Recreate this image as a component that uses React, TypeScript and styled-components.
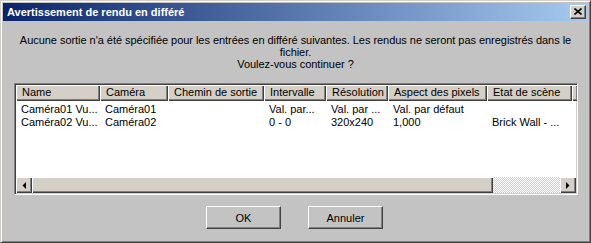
import React from "react";
import styled, { createGlobalStyle } from "styled-components";

const Global = createGlobalStyle`
  html, body { margin: 0; padding: 0; background: #c3c3c3; }
  * { box-sizing: border-box; }
`;

const FACE = "#c3c3c3";
const BEIGE = "#d4d0c8";

const Window = styled.div`
  width: 591px;
  height: 243px;
  background: ${FACE};
  border-top: 1px solid ${BEIGE};
  border-left: 1px solid ${BEIGE};
  border-right: 1px solid #404040;
  border-bottom: 1px solid #404040;
  box-shadow: inset 1px 1px #fff, inset -1px -1px #808080;
  padding: 2px;
  display: flex;
  flex-direction: column;
  font-family: "Liberation Sans", Arial, sans-serif;
  font-size: 11px;
  color: #000;
`;

const TitleBar = styled.div`
  height: 18px;
  display: flex;
  align-items: center;
  justify-content: space-between;
  padding: 0 2px 0 2px;
  background: linear-gradient(to right, #0a246a, #a6caf0);
`;

const Title = styled.span`
  color: #fff;
  font-weight: bold;
  font-size: 11px;
  padding-left: 2px;
  white-space: nowrap;
`;

const CloseButton = styled.div`
  width: 16px;
  height: 14px;
  background: ${BEIGE};
  border-top: 1px solid #fff;
  border-left: 1px solid #fff;
  border-right: 1px solid #404040;
  border-bottom: 1px solid #404040;
  box-shadow: inset -1px -1px #808080;
  display: flex;
  align-items: center;
  justify-content: center;
  padding-right: 1px;
  padding-bottom: 1px;
`;

const Message = styled.div`
  margin-top: 13px;
  text-align: center;
  line-height: 12px;
  white-space: nowrap;
  letter-spacing: -0.04px;
`;

const ListView = styled.div`
  margin: 13px 0 0 11px;
  width: 564px;
  height: 112px;
  background: #fff;
  border-top: 1px solid #808080;
  border-left: 1px solid #808080;
  border-right: 1px solid #fff;
  border-bottom: 1px solid #fff;
  box-shadow: inset 1px 1px #404040, inset -1px -1px ${BEIGE};
  padding: 1px;
  display: flex;
  flex-direction: column;
  overflow: hidden;
`;

const HeaderRow = styled.div`
  display: flex;
  height: 16px;
  flex: none;
`;

const HeaderCell = styled.div<{ $w: number }>`
  width: ${(p) => p.$w}px;
  flex: none;
  height: 16px;
  line-height: 15px;
  padding-left: 6px;
  background: ${BEIGE};
  box-shadow: inset 1px 1px #fff, inset -1px -1px #404040, inset -2px -2px #808080;
  white-space: nowrap;
  overflow: hidden;
`;

const Body = styled.div`
  flex: 1;
  padding-top: 2px;
`;

const Row = styled.div`
  display: flex;
  height: 13px;
  line-height: 13px;
`;

const Cell = styled.div<{ $w: number }>`
  width: ${(p) => p.$w}px;
  flex: none;
  padding-left: 5px;
  white-space: nowrap;
  overflow: hidden;
`;

const ScrollBar = styled.div`
  display: flex;
  height: 16px;
  flex: none;
  background: repeating-conic-gradient(#fff 0 25%, ${BEIGE} 0 50%) 0 0 / 2px 2px;
`;

const ScrollButton = styled.div`
  width: 16px;
  height: 16px;
  flex: none;
  background: ${BEIGE};
  box-shadow: inset 1px 1px #fff, inset -1px -1px #404040, inset -2px -2px #808080;
  display: flex;
  align-items: center;
  justify-content: center;
`;

const Thumb = styled.div<{ $w: number }>`
  width: ${(p) => p.$w}px;
  flex: none;
  height: 16px;
  background: ${BEIGE};
  box-shadow: inset 1px 1px #fff, inset -1px -1px #404040, inset -2px -2px #808080;
`;

const Spacer = styled.div`
  flex: 1;
`;

const ButtonRow = styled.div`
  margin-top: 11px;
  display: flex;
  justify-content: center;
  gap: 27px;
  padding-right: 2px;
`;

const Button = styled.div`
  width: 75px;
  height: 23px;
  background: ${FACE};
  border-top: 1px solid #fff;
  border-left: 1px solid #fff;
  border-right: 1px solid #404040;
  border-bottom: 1px solid #404040;
  box-shadow: inset -1px -1px #808080;
  display: flex;
  align-items: center;
  justify-content: center;
  font-size: 11px;
`;

const columns = [
  { title: "Name", w: 84 },
  { title: "Caméra", w: 68 },
  { title: "Chemin de sortie", w: 96 },
  { title: "Intervalle", w: 62 },
  { title: "Résolution", w: 62 },
  { title: "Aspect des pixels", w: 99 },
  { title: "Etat de scène", w: 85 },
  { title: "", w: 4 },
];

const rows = [
  ["Caméra01 Vu...", "Caméra01", "", "Val. par...", "Val. par ...", "Val. par défaut", ""],
  ["Caméra02 Vu...", "Caméra02", "", "0 - 0", "320x240", "1,000", "Brick Wall - ..."],
];

const Arrow = ({ dir }: { dir: "left" | "right" }) => (
  <svg width="4" height="7" viewBox="0 0 4 7">
    {dir === "left" ? (
      <polygon points="4,0 4,7 0.5,3.5" fill="#000" />
    ) : (
      <polygon points="0,0 0,7 3.5,3.5" fill="#000" />
    )}
  </svg>
);

export default function App() {
  return (
    <>
      <Global />
      <Window>
        <TitleBar>
          <Title>Avertissement de rendu en différé</Title>
          <CloseButton>
            <svg width="8" height="7" viewBox="0 0 8 7">
              <path d="M0.5 0.5 L7.5 6.5 M7.5 0.5 L0.5 6.5" stroke="#000" strokeWidth="1.6" fill="none" />
            </svg>
          </CloseButton>
        </TitleBar>
        <Message>
          Aucune sortie n'a été spécifiée pour les entrées en différé suivantes. Les rendus ne seront pas enregistrés dans le
          <br />
          fichier.
          <br />
          Voulez-vous continuer ?
        </Message>
        <ListView>
          <HeaderRow>
            {columns.map((c, i) => (
              <HeaderCell key={i} $w={c.w}>
                {c.title}
              </HeaderCell>
            ))}
          </HeaderRow>
          <Body>
            {rows.map((r, i) => (
              <Row key={i}>
                {r.map((v, j) => (
                  <Cell key={j} $w={columns[j].w}>
                    {v}
                  </Cell>
                ))}
              </Row>
            ))}
          </Body>
          <ScrollBar>
            <ScrollButton>
              <Arrow dir="left" />
            </ScrollButton>
            <Thumb $w={461} />
            <Spacer />
            <ScrollButton>
              <Arrow dir="right" />
            </ScrollButton>
          </ScrollBar>
        </ListView>
        <ButtonRow>
          <Button>OK</Button>
          <Button>Annuler</Button>
        </ButtonRow>
      </Window>
    </>
  );
}
